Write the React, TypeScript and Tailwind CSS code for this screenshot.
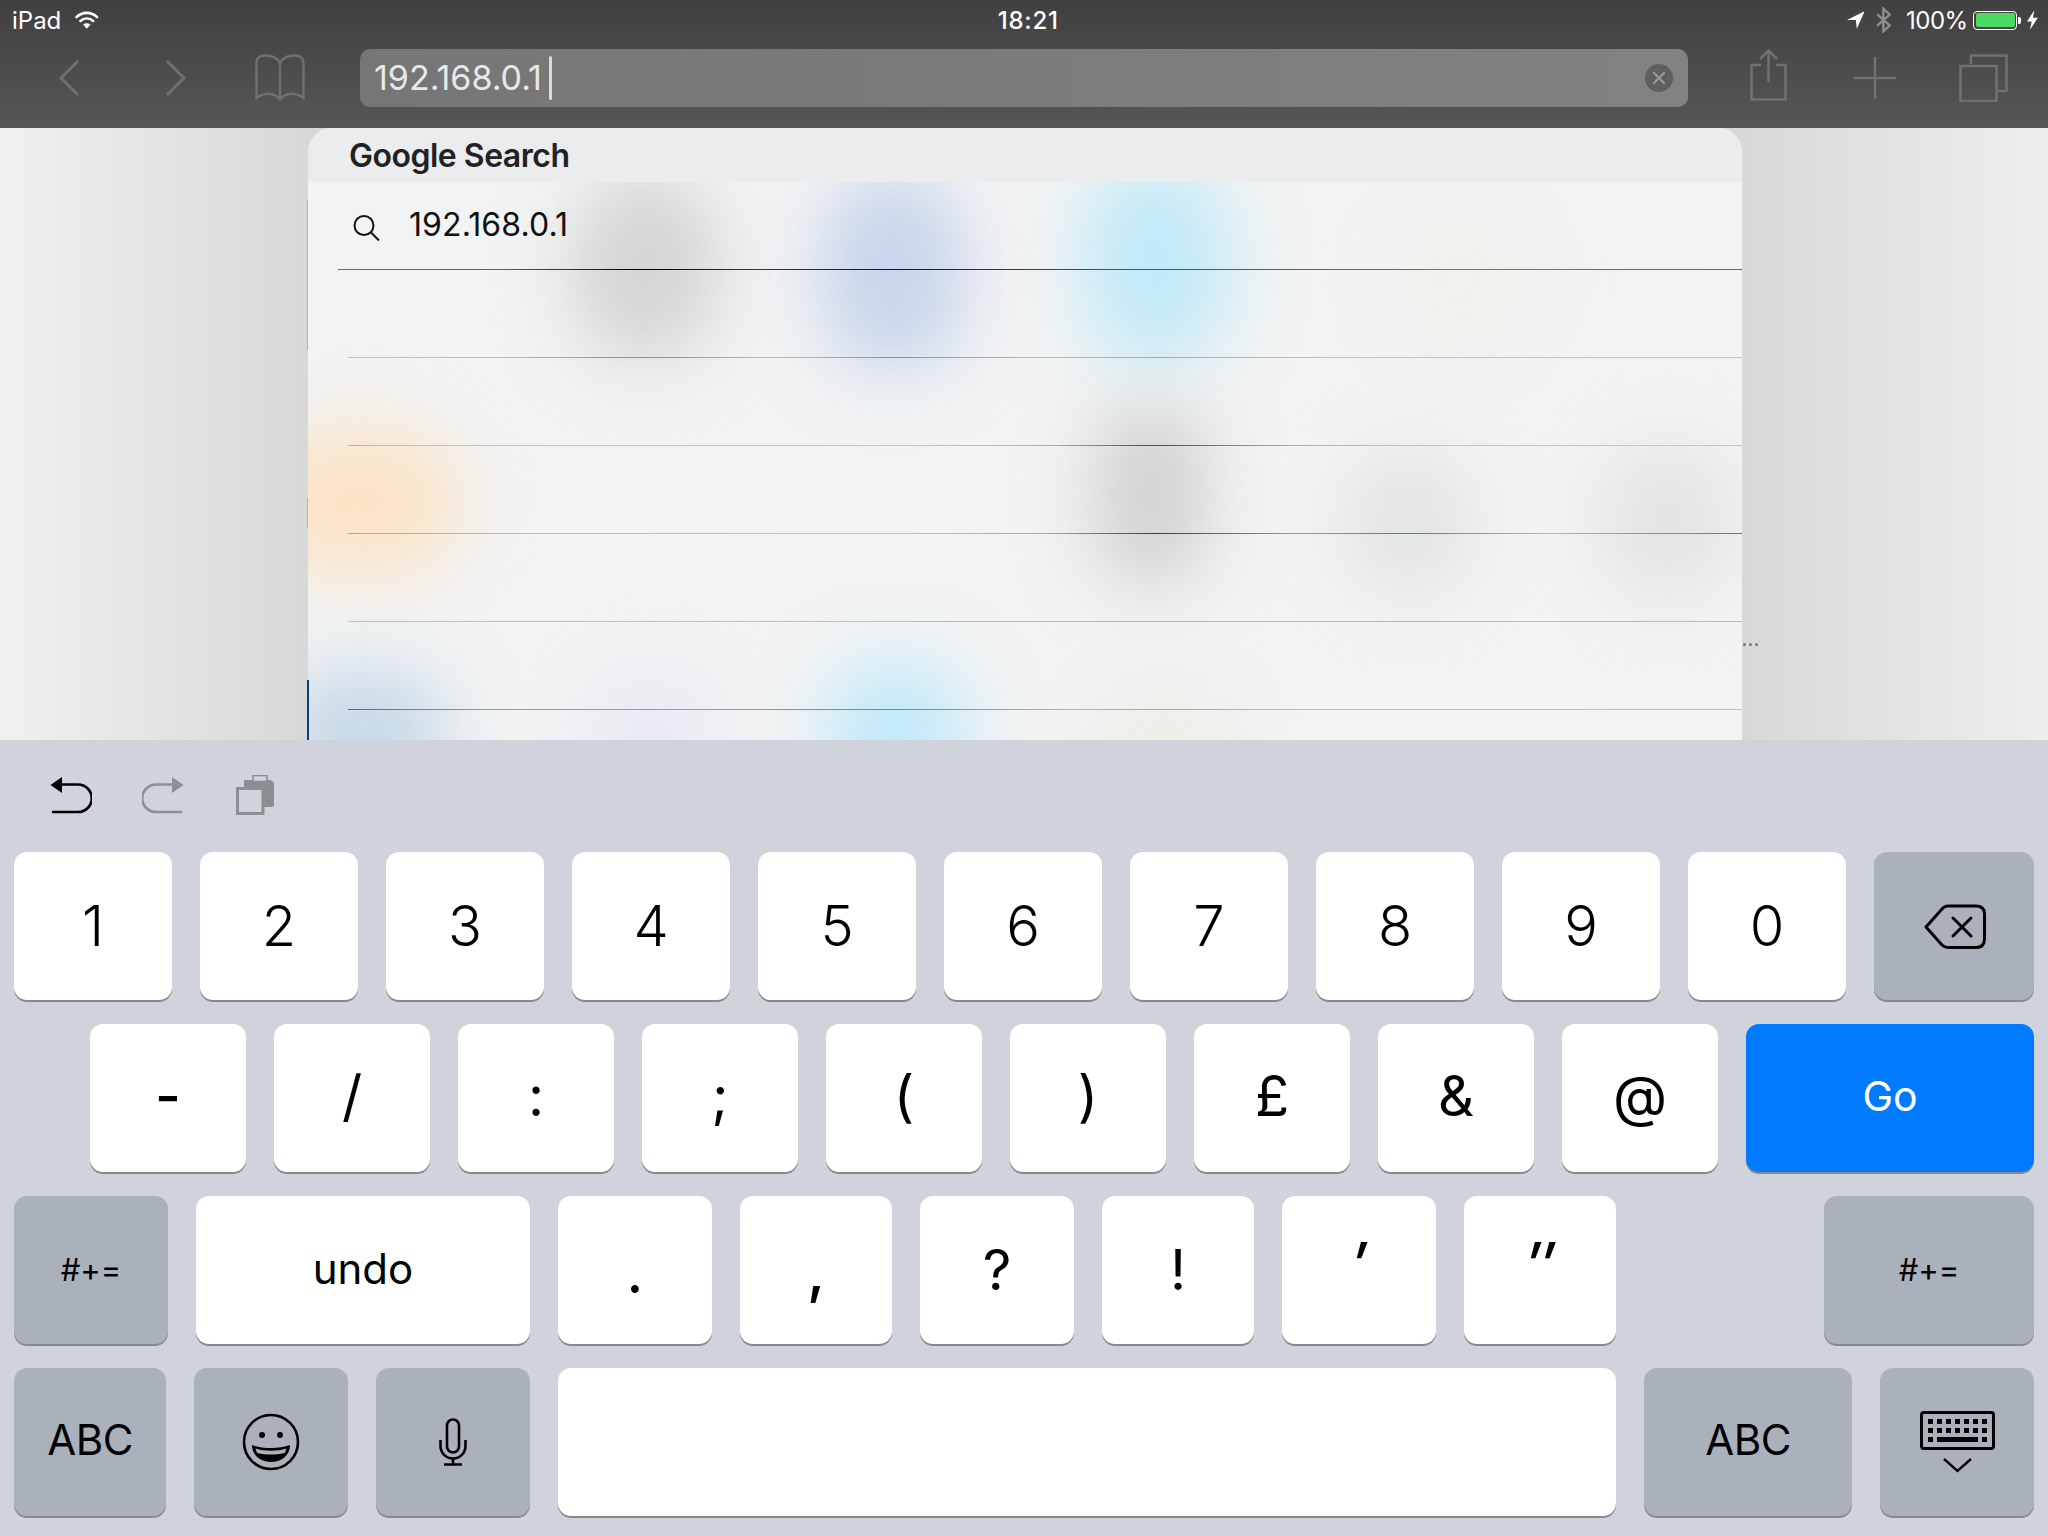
import React from "react";

const base = "flex shrink-0 items-center justify-center rounded-[13px] h-[148px] shadow-[0_2px_0_#88898d] text-black";

function Key({ w, children, dark, size = "text-[56px] font-light" }: { w: string; children: React.ReactNode; dark?: boolean; size?: string }) {
  return <div className={`${base} ${w} ${size} ${dark ? "bg-[#abb1ba]" : "bg-white"}`}>{children}</div>;
}

function Row({ children, line }: { children?: React.ReactNode; line: string }) {
  return (
    <div className="relative z-10 flex flex-col h-[88px]">
      <div className="flex-1 flex items-center">{children}</div>
      <div className={`h-px ${line}`} />
    </div>
  );
}

const blobs = [
  "left-[262px] top-[-10px] w-[150px] h-[190px] bg-[#d5d5d5]",
  "left-[512px] top-[-10px] w-[145px] h-[200px] bg-[#c8d5ec]",
  "left-[775px] top-[-20px] w-[145px] h-[200px] bg-[#c0e9f8]",
  "left-[1080px] top-[20px] w-[140px] h-[160px] bg-[#f1f0ec]",
  "left-[-50px] top-[250px] w-[200px] h-[140px] bg-[#fbe2c4]",
  "left-[785px] top-[220px] w-[115px] h-[185px] bg-[#d1d4d1]",
  "left-[1040px] top-[270px] w-[120px] h-[140px] bg-[#e0e4e0]",
  "left-[1295px] top-[265px] w-[130px] h-[150px] bg-[#e0e4df]",
  "left-[-30px] top-[485px] w-[170px] h-[135px] bg-[#c8d9e8]",
  "left-[275px] top-[495px] w-[135px] h-[110px] bg-[#e7e9f3]",
  "left-[515px] top-[480px] w-[145px] h-[140px] bg-[#c0e9fa]",
  "left-[785px] top-[500px] w-[140px] h-[120px] bg-[#ebefe7]",
];

export default function App() {
  return (
    <div className="w-[2048px] h-[1536px] overflow-hidden relative flex flex-col [font-family:Inter,'Liberation_Sans',sans-serif]">
      {/* top bars */}
      <div className="h-[128px] shrink-0 flex flex-col bg-[linear-gradient(180deg,#404040,#565656)] text-white">
        <div className="h-[42px] flex items-center text-[24px] pl-[12px] pr-[10px]">
          <span className="leading-none">iPad</span>
          <svg width="24" height="18" viewBox="0 0 24 18" className="ml-[14px] -mt-[2px]" fill="none" stroke="#fff" strokeWidth="2.6" strokeLinecap="round">
            <path d="M1.5 6 C7.5 0.3 16.5 0.3 22.5 6" />
            <path d="M5.5 10 C9.5 6.5 14.5 6.5 18.5 10" />
            <path d="M12 18 L8.2 13.6 C10.5 12 13.5 12 15.8 13.6 Z" fill="#fff" stroke="none" />
          </svg>
          <span className="ml-[897px] w-[66px] text-center font-medium leading-none tracking-[0.8px]">18:21</span>
          <svg width="18" height="18" viewBox="0 0 18 18" className="ml-[786px] -mt-[2px]" fill="#fff">
            <path d="M0 9 L18 0 L10 18 L9 9 Z" />
          </svg>
          <svg width="15" height="26" viewBox="0 0 15 26" className="ml-[12px] -mt-[2px]" fill="none" stroke="#8e8e8e" strokeWidth="2.4">
            <path d="M1 7 L14 18.5 L7.5 24.5 V1.5 L14 7.5 L1 19" />
          </svg>
          <span className="ml-[15px] w-[60px] leading-none tracking-[-0.5px]">100%</span>
          <div className="ml-[7px] -mt-[2px] w-[45px] h-[19px] rounded-[4px] border border-white p-[1.5px]">
            <div className="w-full h-full rounded-[2px] bg-[#4cd964]" />
          </div>
          <div className="ml-px -mt-[2px] w-[3px] h-[7px] rounded-r-[2px] bg-white" />
          <svg width="11" height="20" viewBox="0 0 11 20" className="ml-[6px] -mt-[2px]" fill="#fff">
            <path d="M7.5 0 L0 11.5 H4.8 L3 20 L11 7.8 H6 Z" />
          </svg>
        </div>
        <div className="mt-[7px] h-[58px] flex items-center pl-[59px]">
          <svg width="20" height="36" viewBox="0 0 20 36" fill="none" stroke="#707070" strokeWidth="3">
            <path d="M19 1 L2 18 L19 35" />
          </svg>
          <svg width="20" height="36" viewBox="0 0 20 36" className="ml-[87px]" fill="none" stroke="#707070" strokeWidth="3">
            <path d="M1 1 L18 18 L1 35" />
          </svg>
          <svg width="50" height="48" viewBox="0 0 50 48" className="ml-[69px]" fill="none" stroke="#707070" strokeWidth="2.4">
            <path d="M25 9 C22 3 16 1.5 10 1.5 C5 1.5 1.5 4 1.5 9 V44 C9 38 20 38 25 46 C30 38 41 38 48.5 44 V9 C48.5 4 45 1.5 40 1.5 C34 1.5 28 3 25 9 V46" />
          </svg>
          <div className="ml-[55px] w-[1328px] h-[58px] rounded-[10px] bg-[linear-gradient(90deg,#767676,#828282)] flex items-center pl-[14px] pr-[15px]">
            <span className="text-[34px] text-[#e8e8e8] leading-none tracking-[0px]">192.168.0.1</span>
            <div className="ml-[7px] w-[3px] h-[44px] rounded-[2px] bg-[#dcdcdc]" />
            <div className="ml-auto w-[28px] h-[28px] rounded-full bg-[#5f5f5f] flex items-center justify-center">
              <svg width="12" height="12" viewBox="0 0 12 12" stroke="#969696" strokeWidth="2.4" strokeLinecap="round">
                <path d="M1 1 L11 11 M11 1 L1 11" />
              </svg>
            </div>
          </div>
          <svg width="37" height="52" viewBox="0 0 37 52" className="ml-[62px] -mt-[6px]" fill="none" stroke="#717171" strokeWidth="2.5">
            <path d="M11 16 H1.5 V50.5 H35.5 V16 H26" />
            <path d="M18.5 33 V2 M10 10 L18.5 1.5 L27 10" />
          </svg>
          <svg width="42" height="42" viewBox="0 0 42 42" className="ml-[67px]" fill="none" stroke="#717171" strokeWidth="2.5">
            <path d="M21 0 V42 M0 21 H42" />
          </svg>
          <svg width="49" height="48" viewBox="0 0 49 48" className="ml-[63px]" fill="none" stroke="#717171" strokeWidth="2.5">
            <path d="M12 10 V1.5 H47.5 V37 H39" />
            <rect x="1.5" y="12" width="36" height="35" />
          </svg>
        </div>
      </div>

      {/* page */}
      <div className="relative h-[612px] shrink-0 bg-[linear-gradient(90deg,#f0f0f0_0%,#d8d8d8_15%,#d8d8d8_85%,#eeeeee_100%)]">
        <div className="relative ml-[308px] w-[1434px] h-[612px] overflow-hidden rounded-t-[24px] bg-[#f2f3f3]">
          <div className="relative z-20 h-[54px] bg-[#ebecee] flex items-center pl-[41px]">
            <span className="text-[32px] font-semibold text-[#222] tracking-[-0.5px] leading-none mt-[2px]">Google Search</span>
          </div>
          <div className="relative h-[558px]">
            {blobs.map((b) => (
              <div key={b} className={`absolute rounded-full blur-[34px] ${b}`} />
            ))}
            <Row line="ml-[30px] bg-[linear-gradient(90deg,#6c6c7a_0px,#5a5a60_170px,#000000_306px,#3a3a48_420px,#00106a_554px,#1a4a8a_700px,#0a6ab0_817px,#606468_1000px,#7a6e62_1120px,#6a6a6a_1404px)]">
              <svg width="27" height="26" viewBox="0 0 27 26" className="ml-[45px] mt-[4px]" fill="none" stroke="#111" strokeWidth="2">
                <circle cx="11" cy="10.5" r="9.5" />
                <path d="M18 17.5 L26 25.5" />
              </svg>
              <span className="ml-[29px] text-[32px] text-[#111] leading-none tracking-[0.1px] -mt-[2px]">192.168.0.1</span>
            </Row>
            <Row line="ml-[40px] bg-[linear-gradient(90deg,#c2c2c2_0px,#bdbdbd_150px,#8e8e8e_296px,#bdbdbd_430px,#7d92c8_544px,#a8c0d4_700px,#72b8d8_807px,#c4c4c4_1000px,#c4c4c4_1394px)]" />
            <Row line="ml-[40px] bg-[linear-gradient(90deg,#e8a768_0px,#d8b898_60px,#c4c4c4_200px,#c4c8cc_550px,#b0b0b0_700px,#4a4a4a_807px,#b0b0b0_950px,#c6c6c6_1100px,#c4c4c4_1394px)]" />
            <Row line="ml-[40px] bg-[linear-gradient(90deg,#e89a48_0px,#e0a870_60px,#c0bcb8_180px,#c0c4c8_550px,#a8a8a8_700px,#3c3c3c_807px,#9a9a9a_950px,#6e766e_1061px,#b8b8b8_1200px,#6e766e_1394px)]" />
            <Row line="ml-[40px] bg-[linear-gradient(90deg,#c0c0c0_0px,#bcc0c0_550px,#b0b8bc_600px,#bcbcbc_1394px)]" />
            <Row line="ml-[40px] bg-[linear-gradient(90deg,#2a78b8_0px,#7a9cc0_140px,#8aa0d0_330px,#00aee8_544px,#92c0d0_720px,#98b890_830px,#bcbcbc_960px,#c0c0c0_1394px)]" />
          </div>
        </div>
        <div className="absolute left-[307px] top-[72px] w-px h-[150px] bg-[#b0b0b0]" />
        <div className="absolute left-[307px] top-[370px] w-px h-[30px] bg-[#f0a860]" />
        <div className="absolute left-[307px] top-[552px] w-[2px] h-[60px] bg-[#0a3f7a]" />
        <div className="absolute left-[1743px] top-[515px] flex gap-[3px]">
          <div className="w-[3px] h-[3px] rounded-full bg-[#7a7a7a]" />
          <div className="w-[3px] h-[3px] rounded-full bg-[#7a7a7a]" />
          <div className="w-[3px] h-[3px] rounded-full bg-[#7a7a7a]" />
        </div>
      </div>

      {/* keyboard */}
      <div className="flex-1 bg-[#d0d3db] flex flex-col">
        <div className="h-[112px] flex items-start pl-[50px] pt-[36px]">
          <svg width="42" height="38" viewBox="0 0 42 38" fill="none">
            <path d="M0.5 9 L12 1 V17 Z" fill="#000" />
            <path d="M10 8.5 H28 A13.7 13.7 0 0 1 28 36 H3" stroke="#000" strokeWidth="2.6" strokeLinecap="round" />
          </svg>
          <svg width="42" height="38" viewBox="0 0 42 38" fill="none" className="ml-[50px]">
            <path d="M41.5 9 L30 1 V17 Z" fill="#8d8f93" />
            <path d="M32 8.5 H14 A13.7 13.7 0 0 0 14 36 H39" stroke="#8d8f93" strokeWidth="2.6" strokeLinecap="round" />
          </svg>
          <svg width="38" height="40" viewBox="0 0 38 40" fill="none" className="ml-[52px] -mt-[1px]">
            <path d="M8 5 H32 Q38 5 38 9 V30 Q38 32 36 32 H8 Z" fill="#8a8d92" />
            <rect x="17" y="0.5" width="14" height="6" fill="#d0d3db" stroke="#8a8d92" strokeWidth="1.6" />
            <rect x="1.5" y="13.5" width="25.5" height="25" fill="#d0d3db" stroke="#8d8f93" strokeWidth="3" />
          </svg>
        </div>
        <div className="flex flex-col gap-[24px]">
          <div className="flex gap-[28px] pl-[14px]">
            {["1", "2", "3", "4", "5", "6", "7", "8", "9", "0"].map((k) => (
              <Key key={k} w="w-[158px]">{k}</Key>
            ))}
            <Key w="w-[160px]" dark>
              <svg width="62" height="45" viewBox="0 0 62 45" fill="none" stroke="#000" strokeWidth="3" strokeLinejoin="round" strokeLinecap="round" className="ml-[2px]">
                <path d="M2 23 L18 5 Q20.5 2 24 2 H52 Q60.5 2 60.5 10 V35 Q60.5 43.5 52 43.5 H24 Q20.5 43.5 18 41 Z" />
                <path d="M29 14 L47 32 M47 14 L29 32" />
              </svg>
            </Key>
          </div>
          <div className="flex gap-[28px] pl-[90px]">
            <Key w="w-[156px]" size="text-[56px] font-medium pb-[4px]">-</Key>
            {["/", ":", ";", "(", ")", "£", "&", "@"].map((k) => (
              <Key key={k} w="w-[156px]" size="text-[56px] font-normal pb-[4px]">{k}</Key>
            ))}
            <div className={`${base} w-[288px] bg-[#007aff] text-white text-[41px] pb-[2px]`}>Go</div>
          </div>
          <div className="flex gap-[28px] pl-[14px]">
            <Key w="w-[154px]" dark size="text-[31px]">#+=</Key>
            <Key w="w-[334px]" size="text-[42px] pb-[3px]">undo</Key>
            <Key w="w-[154px]" size="text-[60px] font-normal pt-[2px]">.</Key>
            <Key w="w-[152px]" size="text-[60px] font-medium">,</Key>
            <Key w="w-[154px]" size="text-[56px] font-normal">?</Key>
            <Key w="w-[152px]" size="text-[56px] font-normal">!</Key>
            <Key w="w-[154px]" size="text-[60px] font-medium"><span className="-mt-[12px] italic">′</span></Key>
            <Key w="w-[152px]" size="text-[60px] font-medium"><span className="-mt-[12px] italic">″</span></Key>
            <Key w="w-[210px] ml-[180px]" dark size="text-[31px]">#+=</Key>
          </div>
          <div className="flex gap-[28px] pl-[14px]">
            <Key w="w-[152px]" dark size="text-[42px] pb-[5px] tracking-[-0.5px]">ABC</Key>
            <Key w="w-[154px]" dark>
              <svg width="58" height="58" viewBox="0 0 58 58" fill="none">
                <circle cx="29" cy="29" r="27" stroke="#000" strokeWidth="2.6" />
                <circle cx="20" cy="22" r="3" fill="#000" />
                <circle cx="38" cy="22" r="3" fill="#000" />
                <path d="M10 32 C20 36 38 36 48 32 C48 42 40 49 29 49 C18 49 10 42 10 32 Z" fill="#000" />
                <path d="M13.5 35.5 C22 38.5 36 38.5 44.5 35.5 C44 37.5 43.5 38.5 42.5 40 C34 42 24 42 15.5 40 C14.5 38.5 14 37.5 13.5 35.5 Z" fill="#abb1ba" />
              </svg>
            </Key>
            <Key w="w-[154px]" dark>
              <svg width="28" height="48" viewBox="0 0 28 48" fill="none" stroke="#000" strokeWidth="2.6">
                <rect x="8" y="1.5" width="12" height="33" rx="6" />
                <path d="M1.5 22 V28 A12.5 12.5 0 0 0 26.5 28 V22" />
                <path d="M14 40 V46 M5 46.5 H23" />
              </svg>
            </Key>
            <Key w="w-[1058px]"><span /></Key>
            <Key w="w-[208px]" dark size="text-[42px] pb-[5px] tracking-[-0.5px]">ABC</Key>
            <Key w="w-[154px]" dark>
              <svg width="75" height="62" viewBox="0 0 75 62" fill="none">
                <rect x="1.5" y="1.5" width="72" height="36" rx="2.5" stroke="#000" strokeWidth="3" />
                {[8, 17, 26, 35, 44, 53, 62].map((x) => (
                  <React.Fragment key={x}>
                    <rect x={x} y="8" width="5" height="5" fill="#000" />
                    <rect x={x} y="17" width="5" height="5" fill="#000" />
                  </React.Fragment>
                ))}
                <rect x="8" y="26" width="5" height="5" fill="#000" />
                <rect x="17" y="26" width="41" height="5" fill="#000" />
                <rect x="62" y="26" width="5" height="5" fill="#000" />
                <path d="M24 48 L37.5 60 L51 48" stroke="#000" strokeWidth="2.4" />
              </svg>
            </Key>
          </div>
        </div>
      </div>
    </div>
  );
}
